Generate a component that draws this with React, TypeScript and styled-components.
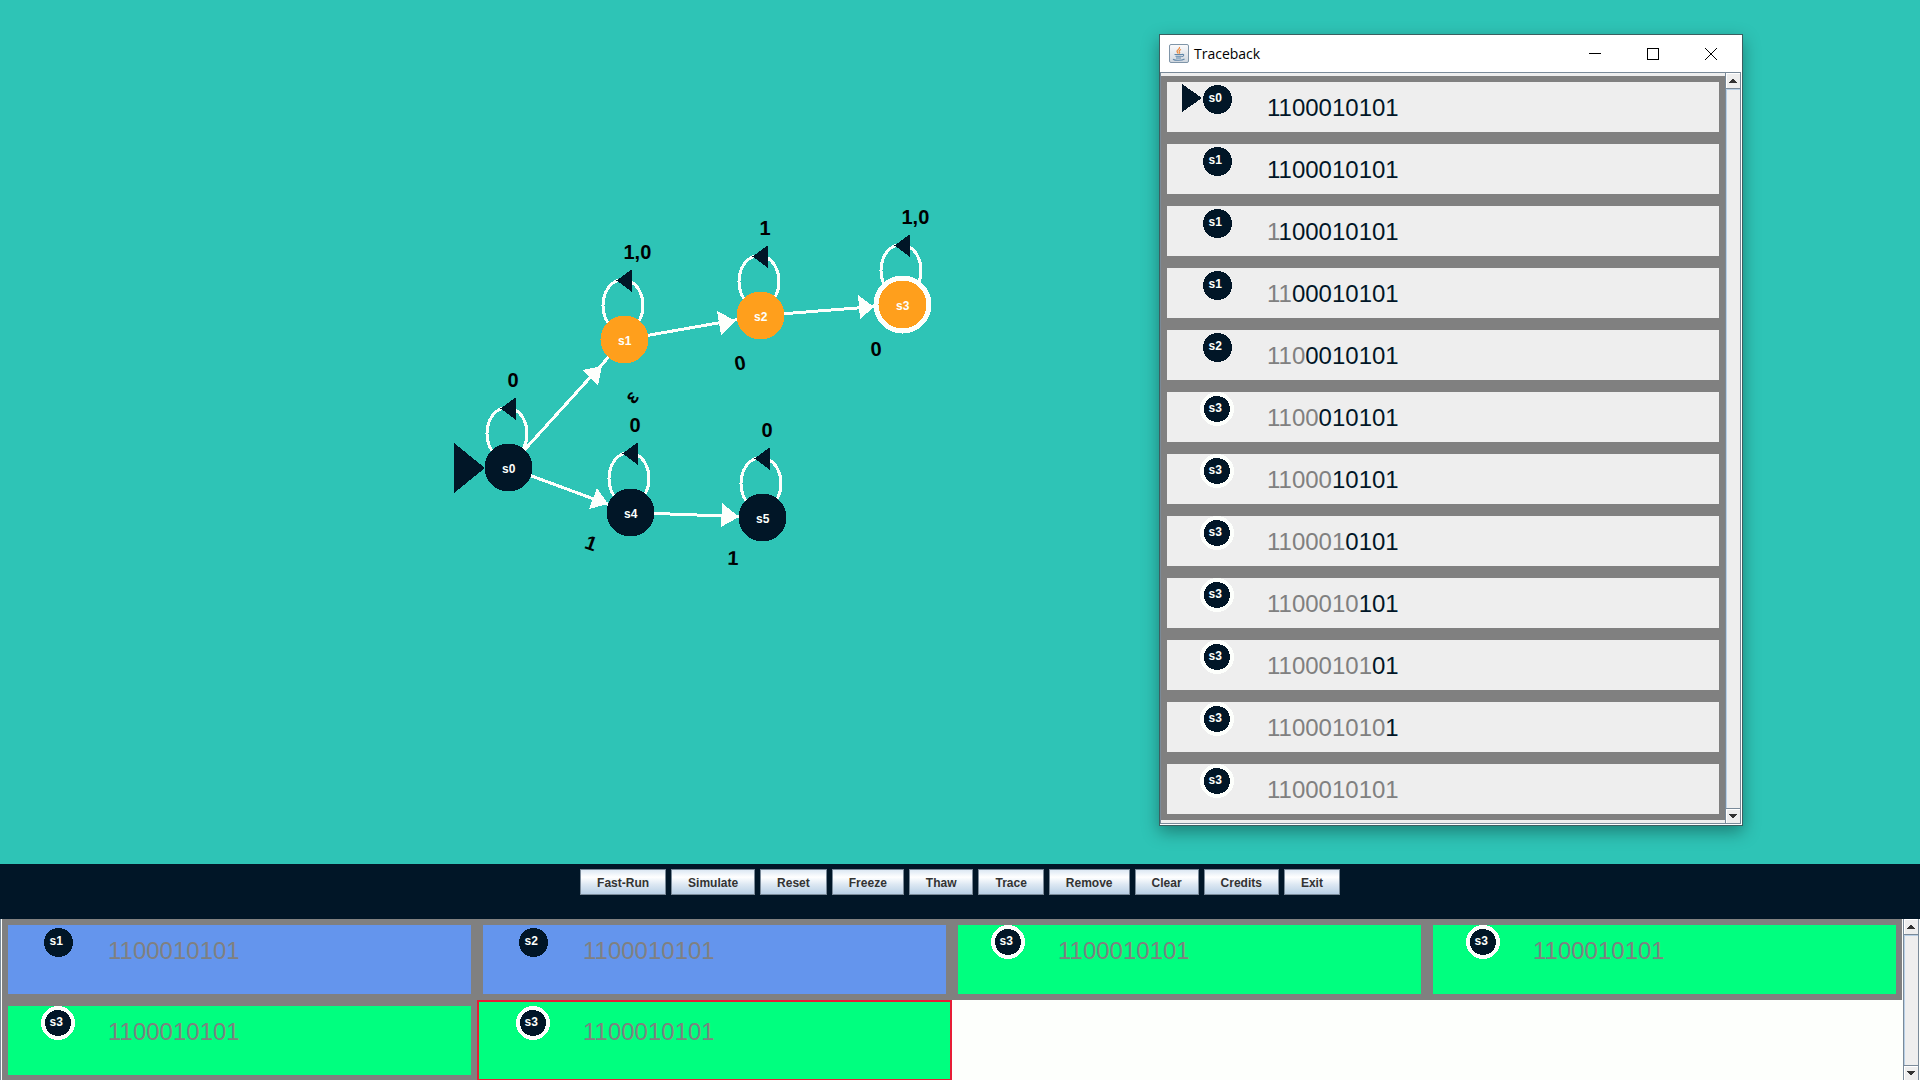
import React from "react";
import styled, { createGlobalStyle, css } from "styled-components";

const color = {
  teal: "#2ec4b6",
  ink: "#011627",
  paper: "#fdfffc",
  orange: "#ff9f1c",
  red: "#e71d36",
  frozen: "#6495ed",
  accepted: "#00ff7f",
  gray: "#808080",
  panel: "#eeeeee",
  edge: "#7a8a99",
  highlight: "#b8cfe5",
  text: "#333333",
};

const sans = `"Liberation Sans", Arial, sans-serif`;

const GlobalStyle = createGlobalStyle`
  *, *::before, *::after { box-sizing: border-box; }
  body { margin: 0; font-family: ${sans}; background: ${color.teal}; }
`;

const Page = styled.div`
  display: flex;
  flex-direction: column;
  height: 100vh;
  overflow: hidden;
`;

const Canvas = styled.main`
  position: relative;
  flex: 1;
  min-height: 0;
  background: ${color.teal};
`;

const Diagram = styled.svg`
  display: block;
  width: 100%;
  height: 100%;
  font-family: ${sans};
  font-weight: bold;
`;

/* ---------- automaton ---------- */

type StateNode = { id: string; x: number; y: number; loop: string; active?: boolean; final?: boolean };

const states: StateNode[] = [
  { id: "s0", x: 508.5, y: 467.5, loop: "0" },
  { id: "s1", x: 624.5, y: 339.5, loop: "1,0", active: true },
  { id: "s2", x: 760.5, y: 315.5, loop: "1", active: true },
  { id: "s3", x: 902.5, y: 304.5, loop: "1,0", active: true, final: true },
  { id: "s4", x: 630.5, y: 512.5, loop: "0" },
  { id: "s5", x: 762.5, y: 517.5, loop: "0" },
];

type Edge = { from: [number, number]; to: [number, number]; head: string; label: string; at: [number, number]; turn: number };

const edges: Edge[] = [
  { from: [508.5, 467.5], to: [624.5, 339.5], head: "582,370 602,366 598,385", label: "ε", at: [633, 398], turn: -48 },
  { from: [624.5, 339.5], to: [760.5, 315.5], head: "717,311 736,321 721,335", label: "0", at: [740, 363], turn: -10 },
  { from: [760.5, 315.5], to: [902.5, 304.5], head: "858,295 874,307 860,319", label: "0", at: [876, 349], turn: -4 },
  { from: [508.5, 467.5], to: [630.5, 512.5], head: "597,488 608,504 589,509", label: "1", at: [591, 543], turn: 20 },
  { from: [630.5, 512.5], to: [762.5, 517.5], head: "722,503 739,517 721,527", label: "1", at: [733, 558], turn: 2 },
];

const Automaton = () => (
  <Diagram role="img" aria-label="State diagram" shapeRendering="crispEdges">
    {edges.map((e, i) => (
      <g key={i}>
        <line x1={e.from[0]} y1={e.from[1]} x2={e.to[0]} y2={e.to[1]} stroke={color.paper} strokeWidth={3} />
        <polygon points={e.head} fill={color.paper} />
        <text
          fontSize={20}
          textAnchor="middle"
          transform={`translate(${e.at[0]} ${e.at[1]}) rotate(${e.turn})`}
          y={e.label === "ε" ? 5 : 7}
        >
          {e.label}
        </text>
      </g>
    ))}
    <polygon points="454,443 454,493 485,468" fill={color.ink} />
    {states.map((s) => (
      <g key={s.id} transform={`translate(${s.x} ${s.y})`}>
        <ellipse cx={-1.5} cy={-34} rx={20} ry={26} fill="none" stroke={color.paper} strokeWidth={3} />
        <polygon points="-8,-59 7,-70 7,-48" fill={color.ink} />
        <text fontSize={20} x={-1} y={-80.5}>{s.loop}</text>
        {s.final && <circle r={29} fill={color.paper} />}
        <circle r={24} fill={s.active ? color.orange : color.ink} />
        <text fontSize={12} x={-6.5} y={5} fill={color.paper}>{s.id}</text>
      </g>
    ))}
  </Diagram>
);

/* ---------- a machine configuration: state token and its input ---------- */

const Token = styled.svg`
  flex: none;
  display: block;
  width: 100px;
  height: 36px;
  font: bold 12px ${sans};
`;

const Tape = styled.span`
  margin-top: 12px;
  font: 24px/28px ${sans};
  color: ${color.ink};
`;

const Consumed = styled.span`
  color: ${color.gray};
`;

const INPUT = "1100010101";

const Configuration = ({ state, read }: { state: string; read: number }) => (
  <>
    <Token role="img" aria-label={`State ${state}`} shapeRendering="crispEdges">
      {state === "s0" && <polygon points="15,2 15,30 35,16" fill={color.ink} />}
      {state === "s3" ? (
        <>
          <circle cx={50} cy={17} r={17} fill={color.paper} />
          <circle cx={50} cy={17} r={13} fill={color.ink} />
        </>
      ) : (
        <circle cx={50.5} cy={17.5} r={14.5} fill={color.ink} />
      )}
      <text x={41.5} y={20} fill={color.paper}>{state}</text>
    </Token>
    <Tape>
      <Consumed>{INPUT.slice(0, read)}</Consumed>
      {INPUT.slice(read)}
    </Tape>
  </>
);

/* ---------- scroll bar ---------- */

const Bar = styled.div`
  flex: none;
  display: flex;
  flex-direction: column;
  width: 16px;
  background: ${color.panel};
  border: solid ${color.edge};
  border-width: 0 1px;
`;

const Track = styled.div`
  flex: 1;
  border: solid ${color.highlight};
  border-width: 1px 0 0 1px;
`;

const ArrowButton = styled.button<{ $end?: boolean }>`
  display: flex;
  align-items: center;
  justify-content: center;
  height: ${(p) => (p.$end ? 15 : 16)}px;
  padding: 0;
  background: ${color.panel};
  border: 0 solid ${color.edge};
  ${(p) =>
    p.$end
      ? css`border-top-width: 1px;`
      : css`border-bottom-width: 1px;`}
  box-shadow: inset 1px 1px #ffffff;
`;

const ScrollBar = () => (
  <Bar>
    <ArrowButton aria-label="Scroll up">
      <svg width="8" height="4" shapeRendering="crispEdges">
        <path d="M3 0h2v1h1v1h1v1h1v1H0V3h1V2h1V1h1z" fill={color.text} />
      </svg>
    </ArrowButton>
    <Track />
    <ArrowButton $end aria-label="Scroll down">
      <svg width="8" height="4" shapeRendering="crispEdges">
        <path d="M0 0h8v1H7v1H6v1H5v1H3V3H2V2H1V1H0z" fill={color.text} />
      </svg>
    </ArrowButton>
  </Bar>
);

/* ---------- traceback window ---------- */

const Window = styled.section`
  position: absolute;
  top: 34px;
  right: 177px;
  width: 584px;
  background: #ffffff;
  border: 1px solid #3b5f60;
  box-shadow: 0 6px 16px rgba(0, 0, 0, 0.35);
`;

const TitleBar = styled.header`
  display: flex;
  align-items: center;
  height: 37px;
  padding: 0 2px 0 9px;
`;

const Title = styled.h1`
  flex: 1;
  margin: 0 0 0 5px;
  font: 14px/20px "Open Sans", "Noto Sans", sans-serif;
  color: #000000;
`;

const WindowButton = styled.button`
  display: flex;
  align-items: center;
  justify-content: center;
  width: 58px;
  height: 36px;
  padding: 0;
  border: 0;
  background: transparent;
`;

const WindowBody = styled.div`
  display: flex;
  margin-right: 1px;
  margin-bottom: 1px;
  border: solid ${color.edge};
  border-width: 1px 0 1px 1px;
`;

const TraceList = styled.ol`
  flex: 1;
  margin: 0;
  padding: 3px 0;
  list-style: none;
  background: ${color.panel};
`;

const TraceRow = styled.li`
  display: flex;
  align-items: flex-start;
  height: 62px;
  background: ${color.panel};
  border: 6px solid ${color.gray};
`;

const trace: [string, number][] = [
  ["s0", 0],
  ["s1", 0],
  ["s1", 1],
  ["s1", 2],
  ["s2", 3],
  ["s3", 4],
  ["s3", 5],
  ["s3", 6],
  ["s3", 7],
  ["s3", 8],
  ["s3", 9],
  ["s3", 10],
];

const JavaIcon = () => (
  <svg width="20" height="20" viewBox="0 0 20 20" aria-hidden="true">
    <defs>
      <linearGradient id="cupTile" x1="0" y1="0" x2="0" y2="1">
        <stop offset="0" stopColor="#fbfbfc" />
        <stop offset="1" stopColor="#cfd6de" />
      </linearGradient>
    </defs>
    <rect x="0.5" y="0.5" width="19" height="18" rx="1.5" fill="url(#cupTile)" stroke="#7f95a8" />
    <path d="M10.5 3c1 2-3 3-2.500 4.500.2.800 1 1.200 1.200 2M12 5.500c-1.800.8-2.500 1.700-1.500 2.700.6.700 0 1.200-.3 1.500" fill="none" stroke="#ee8a3c" strokeWidth="1.200" />
    <path d="M5.500 10.500h7.500M6.500 12.300h6M7 14h5M13 10.500c2.400-.6 2.200 1.800-.4 2.300M4 15.200c2 1.500 9 1.500 11.500-.2" fill="none" stroke="#5f86a8" strokeWidth="1.100" />
  </svg>
);

const Traceback = () => (
  <Window aria-label="Traceback">
    <TitleBar>
      <JavaIcon />
      <Title>Traceback</Title>
      <WindowButton aria-label="Minimize">
        <svg width="12" height="12" shapeRendering="crispEdges">
          <path d="M0 5h12v1H0z" />
        </svg>
      </WindowButton>
      <WindowButton aria-label="Maximize">
        <svg width="12" height="12" shapeRendering="crispEdges">
          <rect x="0.500" y="0.500" width="11" height="11" fill="none" stroke="#000000" />
        </svg>
      </WindowButton>
      <WindowButton aria-label="Close">
        <svg width="12" height="12">
          <path d="M0 0l12 12M12 0L0 12" stroke="#000000" />
        </svg>
      </WindowButton>
    </TitleBar>
    <WindowBody>
      <TraceList>
        {trace.map(([state, read], i) => (
          <TraceRow key={i}>
            <Configuration state={state} read={read} />
          </TraceRow>
        ))}
      </TraceList>
      <ScrollBar />
    </WindowBody>
  </Window>
);

/* ---------- toolbar ---------- */

const Toolbar = styled.nav`
  flex: none;
  display: flex;
  align-items: flex-start;
  justify-content: center;
  gap: 5px;
  height: 55px;
  padding-top: 5px;
  background: ${color.ink};
`;

const ToolButton = styled.button`
  height: 26px;
  padding: 1px 16px 0;
  border: 1px solid ${color.edge};
  background: linear-gradient(#dde8f3, #ffffff 30%, #dde8f3 60%, #b8cfe5);
  font: bold 12px/24px ${sans};
  color: ${color.text};
  white-space: nowrap;
`;

const actions = ["Fast-Run", "Simulate", "Reset", "Freeze", "Thaw", "Trace", "Remove", "Clear", "Credits", "Exit"];

/* ---------- configurations panel ---------- */

const Panel = styled.section`
  flex: none;
  display: flex;
  height: 161px;
  padding: 0 1px;
  overflow: hidden;
  background: ${color.paper};
  border-left: 1px solid ${color.edge};
`;

const Tiles = styled.div`
  flex: 1;
  display: grid;
  grid-template-columns: repeat(4, 1fr);
  grid-auto-rows: 81px;
  padding-right: 1px;
`;

const Tile = styled.button<{ $fill: string; $selected?: boolean }>`
  display: flex;
  align-items: flex-start;
  padding: ${(p) => (p.$selected ? 4 : 0)}px;
  background: ${(p) => p.$fill};
  border: ${(p) => (p.$selected ? `2px solid ${color.red}` : `6px solid ${color.gray}`)};
  text-align: left;
`;

const tiles = [
  { state: "s1", fill: color.frozen },
  { state: "s2", fill: color.frozen },
  { state: "s3", fill: color.accepted },
  { state: "s3", fill: color.accepted },
  { state: "s3", fill: color.accepted },
  { state: "s3", fill: color.accepted, selected: true },
];

export default function App() {
  return (
    <Page>
      <GlobalStyle />
      <Canvas>
        <Automaton />
        <Traceback />
      </Canvas>
      <Toolbar aria-label="Simulation">
        {actions.map((name) => (
          <ToolButton key={name}>{name}</ToolButton>
        ))}
      </Toolbar>
      <Panel aria-label="Configurations">
        <Tiles>
          {tiles.map((t, i) => (
            <Tile key={i} $fill={t.fill} $selected={t.selected} aria-pressed={!!t.selected}>
              <Configuration state={t.state} read={INPUT.length} />
            </Tile>
          ))}
        </Tiles>
        <ScrollBar />
      </Panel>
    </Page>
  );
}
